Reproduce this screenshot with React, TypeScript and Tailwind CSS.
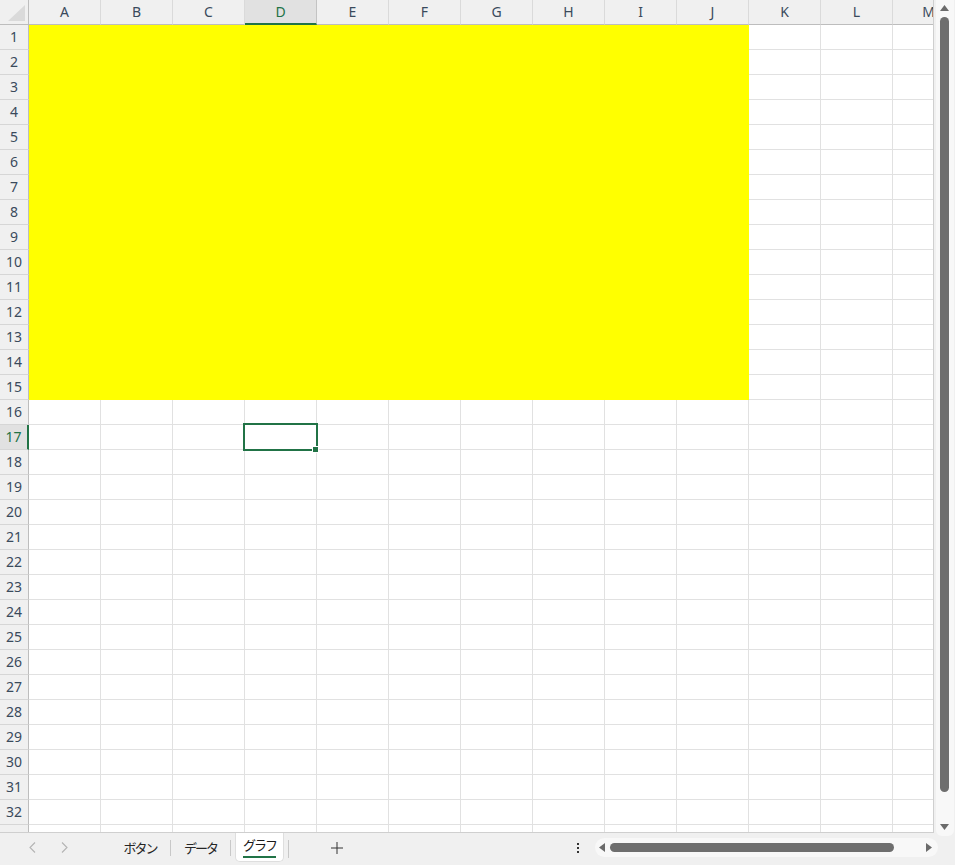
import React from "react";

const COLS = ["A", "B", "C", "D", "E", "F", "G", "H", "I", "J", "K", "L", "M"];
const ROWS = Array.from({ length: 33 }, (_, i) => i + 1);

function Chevron({ dir }: { dir: "l" | "r" }) {
  return (
    <svg width="7" height="11" viewBox="0 0 7 11" fill="none">
      {dir === "l" ? (
        <path d="M6 0.5 L1 5.5 L6 10.5" stroke="#b4b4b4" strokeWidth="1.1" />
      ) : (
        <path d="M1 0.5 L6 5.5 L1 10.5" stroke="#b4b4b4" strokeWidth="1.1" />
      )}
    </svg>
  );
}

export default function App() {
  return (
    <div className="w-[955px] h-[865px] bg-[#f0f0f0] flex flex-col overflow-hidden font-['Segoe_UI','Noto_Sans','Noto_Sans_CJK_JP',sans-serif] select-none">
      <div className="flex h-[833px]">
        {/* grid */}
        <div className="w-[934px] h-[833px] overflow-hidden flex flex-col border-r border-b border-[#cfcfcf] bg-white">
          {/* column header */}
          <div className="flex h-[25px] shrink-0 bg-[#f0f0f0]">
            <div className="w-[29px] h-[25px] shrink-0 border-r border-b border-[#bdbdbd] relative">
              <svg className="absolute left-[8px] top-[5px]" width="17" height="16" viewBox="0 0 17 16">
                <polygon points="17,0 17,16 0,16" fill="#dadada" />
              </svg>
            </div>
            {COLS.map((c) => {
              const sel = c === "D";
              return (
                <div
                  key={c}
                  className={
                    sel
                      ? "w-[72px] h-[25px] shrink-0 flex items-center justify-center bg-[#e1e1e1] border-r border-[#c3c3c3] border-b-2 border-b-[#217346] text-[#217346] text-[14px] pb-[1px]"
                      : "w-[72px] h-[25px] shrink-0 flex items-center justify-center border-r border-[#dadada] border-b border-b-[#bdbdbd] text-[#3a4a5c] text-[14px] pb-[1px]"
                  }
                >
                  {c}
                </div>
              );
            })}
          </div>
          {/* body */}
          <div className="relative flex-1 overflow-hidden">
            {ROWS.map((r) => {
              const selRow = r === 17;
              return (
                <div key={r} className="flex h-[25px]">
                  <div
                    className={
                      selRow
                        ? "w-[29px] h-[25px] shrink-0 flex items-center justify-center bg-[#e1e1e1] border-r-2 border-r-[#217346] border-b border-b-[#d6d6d6] text-[#217346] text-[14px] pb-[2px]"
                        : "w-[29px] h-[25px] shrink-0 flex items-center justify-center bg-[#f0f0f0] border-r border-r-[#bdbdbd] border-b border-b-[#d6d6d6] text-[#3a4a5c] text-[14px] pb-[2px]"
                    }
                  >
                    {r}
                  </div>
                  {COLS.map((c, ci) => {
                    const yellow = r <= 15 && ci < 10;
                    return (
                      <div
                        key={c}
                        className={
                          yellow
                            ? "w-[72px] h-[25px] shrink-0 bg-[#ffff00] border-r border-b border-[#ffff00]"
                            : "w-[72px] h-[25px] shrink-0 bg-white border-r border-b border-[#e1e1e1]"
                        }
                      />
                    );
                  })}
                </div>
              );
            })}
            {/* selection D17 */}
            <div className="absolute left-[243px] top-[398px] w-[75px] h-[28px] border-2 border-[#217346]" />
            <div className="absolute left-[312px] top-[421px] w-[7px] h-[7px] bg-[#217346] border border-white" />
          </div>
        </div>
        {/* vertical scrollbar */}
        <div className="w-[21px] h-[833px] flex justify-center">
          <div className="w-[18px] h-[836px] bg-[#f8f8f8] rounded-b-[6px] flex flex-col items-center">
            <svg className="mt-[5px]" width="9" height="6" viewBox="0 0 9 6">
              <polygon points="4.5,0 9,6 0,6" fill="#6b6b6b" />
            </svg>
            <div className="mt-[6px] w-[9px] h-[775px] rounded-full bg-[#6e6e6e]" />
            <svg className="mt-[32px]" width="9" height="6" viewBox="0 0 9 6">
              <polygon points="0,0 9,0 4.5,6" fill="#6b6b6b" />
            </svg>
          </div>
        </div>
      </div>
      {/* tab bar */}
      <div className="h-[32px] flex items-start relative">
        <div className="w-[16px]" />
        <div className="w-[32px] h-[29px] flex items-center justify-center"><Chevron dir="l" /></div>
        <div className="w-[32px] h-[29px] flex items-center justify-center"><Chevron dir="r" /></div>
        <div className="w-[30px]" />
        <div className="w-[60px] h-[30px] flex items-center justify-center text-[13px] tracking-[-2px] text-[#262626] font-['Noto_Sans_CJK_JP',sans-serif]">ボタン</div>
        <div className="w-[1px] h-[16px] mt-[7px] bg-[#c8c8c8]" />
        <div className="w-[59px] h-[30px] flex items-center justify-center text-[13px] tracking-[-2px] text-[#262626] font-['Noto_Sans_CJK_JP',sans-serif]">データ</div>
        <div className="w-[1px] h-[16px] mt-[7px] bg-[#c8c8c8]" />
        <div className="w-[4px]" />
        <div className="w-[49px] h-[29px] bg-white rounded-b-[5px] border-x border-b border-[#dedede] flex flex-col items-center">
          <div className="h-[23px] flex items-center text-[13px] tracking-[-2px] text-[#1a1a1a] font-['Noto_Sans_CJK_JP',sans-serif]">グラフ</div>
          <div className="w-[33px] h-[2px] bg-[#217346]" />
        </div>
        <div className="w-[4px]" />
        <div className="w-[1px] h-[18px] mt-[7px] bg-[#c8c8c8]" />
        <div className="w-[36px]" />
        <div className="w-[24px] h-[29px] flex items-center justify-center">
          <svg width="12" height="12" viewBox="0 0 12 12">
            <path d="M6 0 V12 M0 6 H12" stroke="#333" strokeWidth="1" />
          </svg>
        </div>
        <div className="w-[226px]" />
        <div className="w-[6px] h-[29px] flex flex-col items-center justify-center gap-[2px]">
          <div className="w-[2px] h-[2px] bg-[#333]" />
          <div className="w-[2px] h-[2px] bg-[#333]" />
          <div className="w-[2px] h-[2px] bg-[#333]" />
        </div>
        <div className="w-[14px]" />
        <div className="w-[343px] h-[19px] mt-[5px] bg-[#f8f8f8] rounded-full flex items-center">
          <svg className="ml-[4px]" width="6" height="9" viewBox="0 0 6 9">
            <polygon points="0,4.5 6,0 6,9" fill="#6b6b6b" />
          </svg>
          <div className="ml-[5px] w-[284px] h-[9px] rounded-full bg-[#6e6e6e]" />
          <svg className="ml-[32px]" width="6" height="9" viewBox="0 0 6 9">
            <polygon points="0,0 6,4.5 0,9" fill="#6b6b6b" />
          </svg>
        </div>
      </div>
    </div>
  );
}
